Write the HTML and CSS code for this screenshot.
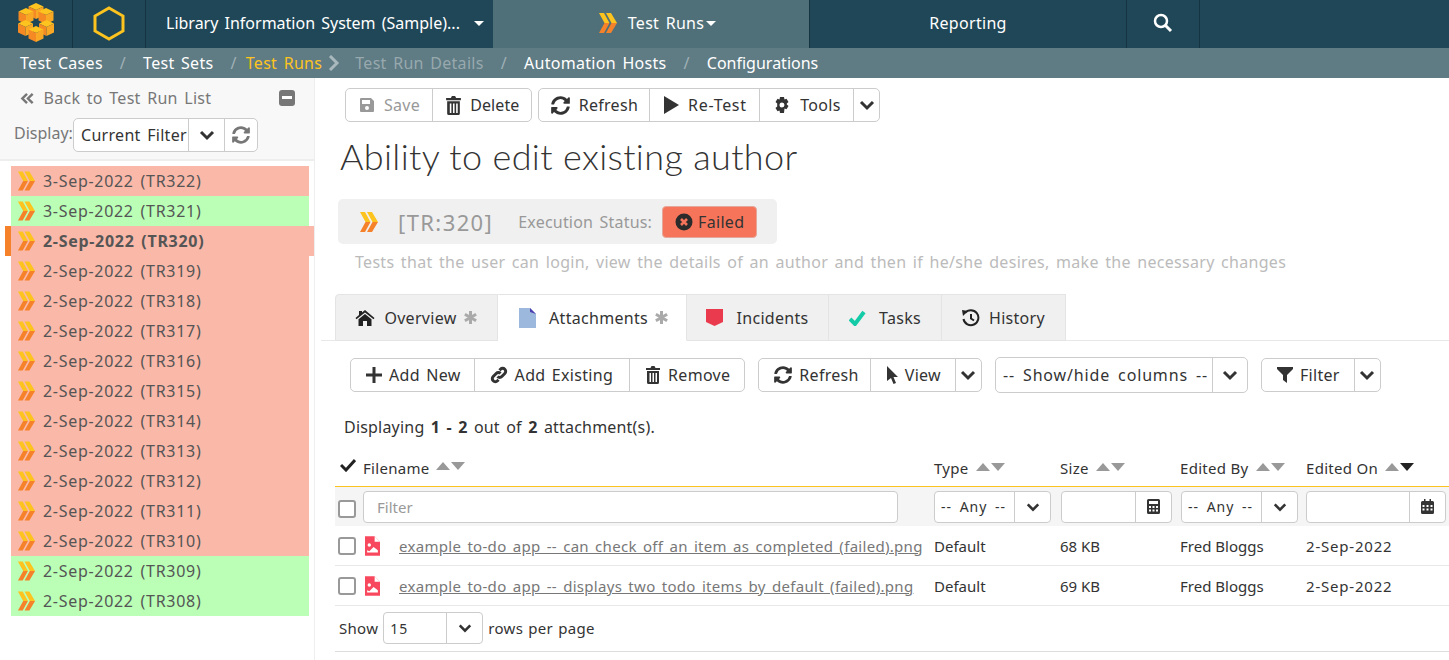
FILE: index.html
```html
<!DOCTYPE html>
<html lang="en">

<head>
    <meta charset="UTF-8" />
    <title>Ability to edit existing author</title>
    <link rel="stylesheet" href="styles.css">
</head>

<body>
    <svg class="sprite" width="0" height="0">
        <symbol id="i-runs" viewBox="0 0 20 20">
            <path fill="#fdc31e" d="M1 0h5l5.500 10H6.500z M8 0h5l6 10h-5.500z" />
            <path fill="#f5822a" d="M6.500 10h5L6 20H1z M13.500 10H19l-6 10H8z" />
        </symbol>
        <symbol id="i-down" viewBox="0 0 16 16">
            <path fill="none" stroke="currentColor" stroke-width="3" d="M2 5l6 6 6-6" />
        </symbol>
        <symbol id="i-refresh" viewBox="0 0 512 512">
            <path fill="currentColor" d="M370 133A168 168 0 0 0 89 215c-1 6-7 11-12 11H20c-8 0-14-7-12-15C30 95 132 8 256 8c68 0 130 27 175 71l36-36c15-15 41-4 41 17v135c0 9-7 17-17 17H356c-21 0-32-26-17-41zM20 296h135c21 0 32 26 17 41l-30 42a168 168 0 0 0 281-82c1-6 7-11 12-11h57c8 0 14 7 12 15-22 116-124 203-248 203-68 0-130-27-175-71l-36 36c-15 15-41 4-41-17V313c0-9 7-17 16-17z" />
        </symbol>
        <symbol id="i-trash" viewBox="0 0 16 18">
            <path fill="currentColor" d="M1 2h4.500l1-2h3l1 2H15v2H1zM2 5h12v11.500a1.500 1.500 0 0 1-1.500 1.500h-9A1.500 1.500 0 0 1 2 16.500zm2.500 2v9h1.500V7zm3 0v9H9V7zm3 0v9H12V7z" />
        </symbol>
        <symbol id="i-chev2" viewBox="0 0 16 16">
            <path fill="none" stroke="currentColor" stroke-width="2.600" d="M7.500 3L2.500 8l5 5M13.500 3l-5 5 5 5" />
        </symbol>
        <symbol id="i-img" viewBox="0 0 14 18">
            <path fill="#f8485e" d="M0 0h9l5 5v13H0z" />
            <path fill="#fff" d="M9 0l5 5H9z" />
            <circle fill="#fff" cx="4" cy="8" r="1.600" />
            <path fill="#fff" d="M2 15v-2l2 1 4-4 4 3v2z" />
        </symbol>
        <symbol id="i-funnel" viewBox="0 0 16 16">
            <path fill="currentColor" d="M0 0h16v2l-6 6v8l-4-3V8L0 2z" />
        </symbol>
        <symbol id="i-star" viewBox="0 0 16 16">
            <path stroke="#aaa" stroke-width="3.200" d="M8 1v14M2 4.500l12 7M14 4.500l-12 7" />
        </symbol>
        <g id="cube">
            <path fill="#fdc31e" d="M0-8L7.500-4.500 0-1-7.500-4.500z" />
            <path fill="#f58a24" d="M-7.500-4.500L0-1V8L-7.500 4.500z" />
            <path fill="#f9a825" d="M7.500-4.500L0-1V8L7.500 4.500z" />
        </g>
    </svg>

    <header class="topbar">
        <div class="top-cell logo-cell">
            <svg width="36" height="40" viewBox="0 0 36 40">
                <use href="#cube" x="18" y="8" />
                <use href="#cube" x="8" y="13" />
                <use href="#cube" x="28" y="13" />
                <use href="#cube" x="7.500" y="25" />
                <use href="#cube" x="28.500" y="25" />
                <use href="#cube" x="18" y="31" />
            </svg>
        </div>
        <div class="top-cell hex-cell">
            <svg width="32" height="35" viewBox="0 0 32 35">
                <path fill="none" stroke="#fdc31e" stroke-width="3" d="M16 2l14 8v15l-14 8-14-8V10z" />
            </svg>
        </div>
        <div class="top-cell project-cell">Library Information System (Sample)... <span class="caret"></span></div>
        <div class="top-cell runs-cell">
            <svg class="runs-icon" width="20" height="20"><use href="#i-runs" /></svg>
            Test Runs<span class="caret caret-tight"></span>
        </div>
        <div class="top-cell reporting-cell">Reporting</div>
        <div class="top-cell search-cell">
            <svg width="20" height="20" viewBox="0 0 20 20">
                <circle cx="8" cy="8" r="6" fill="none" stroke="#fff" stroke-width="2.500" />
                <path stroke="#fff" stroke-width="3" d="M12 12l6 6" />
            </svg>
        </div>
    </header>

    <nav class="subbar">
        <a class="sub-link">Test Cases</a><span class="sub-sep">/</span>
        <a class="sub-link">Test Sets</a><span class="sub-sep sub-sep-near">/</span>
        <a class="sub-link sub-active">Test Runs</a>
        <svg class="sub-arrow" width="12" height="16" viewBox="0 0 12 16"><path fill="none" stroke="#a9b8bc" stroke-width="3" d="M2 1l7 7-7 7" /></svg>
        <a class="sub-link sub-muted">Test Run Details</a><span class="sub-sep">/</span>
        <a class="sub-link">Automation Hosts</a><span class="sub-sep">/</span>
        <a class="sub-link sub-last">Configurations</a>
    </nav>

    <div class="page">
        <aside class="sidebar">
            <div class="side-head">
                <div class="back-row">
                    <span class="back-link"><svg width="15" height="15"><use href="#i-chev2" /></svg> Back to Test Run List</span>
                    <span class="collapse"></span>
                </div>
                <div class="display-row">
                    <span class="display-label">Display:</span>
                    <div class="btn-group display-group">
                        <span class="btn display-value">Current Filter</span>
                        <span class="btn btn-icon display-caret"><svg width="16" height="16"><use href="#i-down" /></svg></span>
                        <span class="btn btn-icon btn-grey display-refresh"><svg width="18" height="18"><use href="#i-refresh" /></svg></span>
                    </div>
                </div>
            </div>
            <ul id="runList" class="run-list"></ul>
        </aside>

        <main class="main">
            <div class="toolbar">
                <div class="btn-group">
                    <span class="btn btn-disabled">
                        <svg width="16" height="16" viewBox="0 0 16 16"><path fill="currentColor" fill-rule="evenodd" d="M2 1h10l3 3v10a1 1 0 0 1-1 1H2a1 1 0 0 1-1-1V2a1 1 0 0 1 1-1zm1 2v4h8V3zm5 6a2 2 0 1 0 0 4 2 2 0 0 0 0-4z" /></svg>
                        Save</span>
                    <span class="btn btn-delete"><svg width="17" height="19"><use href="#i-trash" /></svg> Delete</span>
                </div>
                <div class="btn-group">
                    <span class="btn btn-refresh"><svg width="19" height="19"><use href="#i-refresh" /></svg> Refresh</span>
                    <span class="btn btn-retest"><svg width="16" height="18" viewBox="0 0 16 18"><path fill="currentColor" d="M1 0l15 9-15 9z" /></svg> Re-Test</span>
                    <span class="btn btn-tools">
                        <svg width="18" height="18" viewBox="0 0 18 18"><path fill="currentColor" fill-rule="evenodd" d="M7 1h4l.5 2.500 2-.8 2 3.300-1.700 1.500v1l1.700 1.500-2 3.300-2-.8L11 17H7l-.5-2.500-2 .8-2-3.300L4.200 10.500v-3L2.500 6l2-3.300 2 .8zM9 6.500a2.500 2.500 0 1 0 0 5 2.500 2.500 0 0 0 0-5z" /></svg>
                        Tools</span>
                    <span class="btn btn-icon btn-caret"><svg width="16" height="16"><use href="#i-down" /></svg></span>
                </div>
            </div>

            <h1 class="title">Ability to edit existing author</h1>

            <div class="status-box">
                <svg class="status-icon" width="20" height="20"><use href="#i-runs" /></svg>
                <span class="status-token">[TR:320]</span>
                <span class="status-label">Execution Status:</span>
                <span class="status-value">
                    <svg width="18" height="18" viewBox="0 0 18 18"><circle cx="9" cy="9" r="8.500" fill="#2b2b2b" /><path stroke="#f6755a" stroke-width="2.600" d="M6 6l6 6M12 6l-6 6" /></svg>
                    Failed</span>
            </div>

            <p class="description">Tests that the user can login, view the details of an author and then if he/she desires, make the necessary changes</p>

            <div class="tabs">
                <div class="tab tab-overview">
                    <svg width="20" height="18" viewBox="0 0 20 18"><path fill="#222" d="M10 1l9.500 8-1 1.200L10 3.500 1.500 10.200l-1-1.200L4 6V2h3v1.600zM10 5l6.500 5.300V17h-4.500v-5H8v5H3.500v-6.700z" /></svg>
                    Overview <svg class="star" width="15" height="15"><use href="#i-star" /></svg>
                </div>
                <div class="tab tab-active tab-attach">
                    <svg class="tab-doc" width="17" height="20" viewBox="0 0 17 20"><path fill="#9cb8dc" d="M0 0h11l6 6v14H0z" /><path fill="#4b3fb0" d="M11 0l6 6-6-2z" /></svg>
                    Attachments <svg class="star" width="15" height="15"><use href="#i-star" /></svg>
                </div>
                <div class="tab tab-incidents">
                    <svg class="tab-doc" width="17" height="17" viewBox="0 0 17 17"><path fill="#ea3a4d" d="M0 0h17v13l-8.500 4L0 13z" /></svg>
                    Incidents
                </div>
                <div class="tab tab-tasks">
                    <svg class="tab-doc" width="17" height="16" viewBox="0 0 17 16"><path fill="none" stroke="#14cba8" stroke-width="4" d="M1 9l5 5L15 2" /></svg>
                    Tasks
                </div>
                <div class="tab tab-history">
                    <svg width="18" height="18" viewBox="0 0 18 18"><path fill="none" stroke="#222" stroke-width="2" d="M3 4a7.500 7.500 0 1 1-1.500 6M9 5v4.500l3 2" /><path fill="#222" d="M0 1l6 1-5 5z" /></svg>
                    History
                </div>
            </div>

            <div class="grid-tools">
                <div class="btn-group">
                    <span class="btn btn-sm btn-add"><svg width="16" height="16" viewBox="0 0 16 16"><path fill="currentColor" d="M6.500 0h3v6.500H16v3H9.500V16h-3V9.500H0v-3h6.500z" /></svg> Add New</span>
                    <span class="btn btn-sm btn-existing"><svg width="18" height="18" viewBox="0 0 18 18"><path fill="none" stroke="currentColor" stroke-width="3" d="M7.500 10.500a3 3 0 0 0 4.300 0l3-3a3 3 0 0 0-4.300-4.300L9.500 4.300M10.500 7.500a3 3 0 0 0-4.300 0l-3 3a3 3 0 0 0 4.300 4.300l1-1.100" /></svg> Add Existing</span>
                    <span class="btn btn-sm"><svg width="16" height="18"><use href="#i-trash" /></svg> Remove</span>
                </div>
                <div class="btn-group">
                    <span class="btn btn-sm btn-grid-refresh"><svg width="18" height="18"><use href="#i-refresh" /></svg> Refresh</span>
                    <span class="btn btn-sm"><svg width="12" height="18" viewBox="0 0 12 18"><path fill="currentColor" d="M1 0l11 11H7.500l2.500 6-2.500 1-2.500-6-4 3z" /></svg> View</span>
                    <span class="btn btn-sm btn-icon btn-caret"><svg width="16" height="16"><use href="#i-down" /></svg></span>
                </div>
                <div class="btn-group group-tall">
                    <span class="btn btn-sm btn-columns">-- Show/hide columns --</span>
                    <span class="btn btn-sm btn-icon btn-columns-caret"><svg width="16" height="16"><use href="#i-down" /></svg></span>
                </div>
                <div class="btn-group">
                    <span class="btn btn-sm"><svg width="16" height="16"><use href="#i-funnel" /></svg> Filter</span>
                    <span class="btn btn-sm btn-icon btn-caret"><svg width="16" height="16"><use href="#i-down" /></svg></span>
                </div>
            </div>

            <p class="count">Displaying <b>1 - 2</b> out of <b>2</b> attachment(s).</p>

            <table class="grid">
                <colgroup>
                    <col class="col-name">
                    <col class="col-type">
                    <col class="col-size">
                    <col class="col-by">
                    <col class="col-on">
                </colgroup>
                <tr class="grid-head">
                    <th>
                        <div class="name-cell">
                            <svg class="check-all" width="16" height="14" viewBox="0 0 16 14"><path fill="none" stroke="#222" stroke-width="3" d="M1 7l5 5L15 2" /></svg>
                            Filename <span class="sort"><i class="up"></i><i class="dn"></i></span>
                        </div>
                    </th>
                    <th>Type <span class="sort"><i class="up"></i><i class="dn"></i></span></th>
                    <th>Size <span class="sort"><i class="up"></i><i class="dn"></i></span></th>
                    <th>Edited By <span class="sort"><i class="up"></i><i class="dn"></i></span></th>
                    <th>Edited On <span class="sort"><i class="up"></i><i class="dn dn-on"></i></span></th>
                </tr>
                <tr class="grid-filter">
                    <td>
                        <div class="name-cell">
                            <span class="checkbox"></span>
                            <span class="input input-name">Filter</span>
                        </div>
                    </td>
                    <td>
                        <span class="input input-select any-type"><span class="sel-text">-- Any --</span><span class="add-on"><svg width="14" height="14"><use href="#i-down" /></svg></span></span>
                    </td>
                    <td>
                        <span class="input input-select size-box"><span class="sel-text"></span><span class="add-on">
                            <svg width="13" height="15" viewBox="0 0 13 15"><path fill="#333" fill-rule="evenodd" d="M1.500 0h10A1.500 1.500 0 0 1 13 1.500v12a1.500 1.500 0 0 1-1.500 1.500h-10A1.500 1.500 0 0 1 0 13.500v-12A1.500 1.500 0 0 1 1.500 0zM2 2v3h9V2zm0 5v2h2V7zm3.500 0v2h2V7zM9 7v2h2V7zm-7 3.500v2h2v-2zm3.500 0v2h2v-2zm3.500 0v2h2v-2z" /></svg>
                        </span></span>
                    </td>
                    <td>
                        <span class="input input-select any-by"><span class="sel-text">-- Any --</span><span class="add-on"><svg width="14" height="14"><use href="#i-down" /></svg></span></span>
                    </td>
                    <td>
                        <span class="input input-select date-box"><span class="sel-text"></span><span class="add-on">
                            <svg width="13" height="15" viewBox="0 0 13 15"><path fill="#333" fill-rule="evenodd" d="M3 0h1.500v2h4V0H10v2h1.500A1.500 1.500 0 0 1 13 3.500v10a1.500 1.500 0 0 1-1.500 1.500h-10A1.500 1.500 0 0 1 0 13.500v-10A1.500 1.500 0 0 1 1.500 2H3zM1.500 6v2h2V6zm4 0v2h2V6zm4 0v2h2V6zm-8 3.500v2h2v-2zm4 0v2h2v-2zm4 0v2h2v-2z" /></svg>
                        </span></span>
                    </td>
                </tr>
                <tr class="grid-row">
                    <td>
                        <div class="name-cell">
                            <span class="checkbox"></span>
                            <svg class="file-icon" width="15" height="20"><use href="#i-img" /></svg>
                            <a class="file-link">example to-do app -- can check off an item as completed (failed).png</a>
                        </div>
                    </td>
                    <td>Default</td>
                    <td>68 KB</td>
                    <td>Fred Bloggs</td>
                    <td class="date">2-Sep-2022</td>
                </tr>
                <tr class="grid-row">
                    <td>
                        <div class="name-cell">
                            <span class="checkbox"></span>
                            <svg class="file-icon" width="15" height="20"><use href="#i-img" /></svg>
                            <a class="file-link">example to-do app -- displays two todo items by default (failed).png</a>
                        </div>
                    </td>
                    <td>Default</td>
                    <td>69 KB</td>
                    <td>Fred Bloggs</td>
                    <td class="date">2-Sep-2022</td>
                </tr>
            </table>

            <div class="pager">
                Show
                <span class="input input-select page-size"><span class="sel-text">15</span><span class="add-on"><svg width="14" height="14"><use href="#i-down" /></svg></span></span>
                rows per page
            </div>
        </main>
    </div>

    <script src="app.js"></script>
</body>

</html>
```

FILE: app.js
```js
const runs = [
    ["3-Sep-2022", 322, "fail"],
    ["3-Sep-2022", 321, "pass"],
    ["2-Sep-2022", 320, "fail", true],
    ["2-Sep-2022", 319, "fail"],
    ["2-Sep-2022", 318, "fail"],
    ["2-Sep-2022", 317, "fail"],
    ["2-Sep-2022", 316, "fail"],
    ["2-Sep-2022", 315, "fail"],
    ["2-Sep-2022", 314, "fail"],
    ["2-Sep-2022", 313, "fail"],
    ["2-Sep-2022", 312, "fail"],
    ["2-Sep-2022", 311, "fail"],
    ["2-Sep-2022", 310, "fail"],
    ["2-Sep-2022", 309, "pass"],
    ["2-Sep-2022", 308, "pass"],
];

const list = document.getElementById("runList");
runs.forEach(([date, id, status, selected]) => {
    const li = document.createElement("li");
    li.className = `run run-${status}` + (selected ? " run-selected" : "");
    li.innerHTML = `<svg width="19" height="20"><use href="#i-runs" /></svg> ${date} (TR${id})`;
    list.appendChild(li);
});
```

FILE: styles.css
```css
html,
body {
    margin: 0;
    padding: 0;
    font-family: "Noto Sans", sans-serif;
    font-size: 16px;
    letter-spacing: 0.3px;
    word-spacing: 2px;
    color: #333;
    background-color: #fff;
    overflow: hidden;
}

.sprite {
    display: block;
    height: 0;
}

svg {
    flex: none;
}

/* top bar */
.topbar {
    display: flex;
    height: 48px;
    background-color: #1f4757;
    color: #fff;
}

.top-cell {
    display: flex;
    align-items: center;
    justify-content: center;
    box-sizing: border-box;
    padding-bottom: 2px;
    border-right: 1px solid #153442;
}

.logo-cell,
.hex-cell,
.search-cell {
    width: 73px;
}

.project-cell {
    width: 347px;
    justify-content: flex-start;
    padding-left: 20px;
    gap: 8px;
    white-space: pre;
    letter-spacing: 0;
    border-right: none;
}

.runs-cell {
    width: 317px;
    padding-left: 12px;
    background-color: #4f7078;
    gap: 10px;
}

.reporting-cell {
    width: 317px;
}

.caret {
    display: inline-block;
    border-left: 5px solid transparent;
    border-right: 5px solid transparent;
    border-top: 5px solid #fff;
}

.caret-tight {
    margin-left: -8px;
}

/* second nav */
.subbar {
    display: flex;
    align-items: center;
    height: 30px;
    background-color: #5f7b84;
    padding-left: 20px;
    color: #fff;
    white-space: nowrap;
}

.sub-sep {
    color: #9fb1b6;
    margin: 0 17px;
}

.sub-sep-near {
    margin: 0 9px 0 17px;
}

.sub-active {
    color: #fdc31e;
}

.sub-muted {
    color: #98a9ae;
}

.sub-last {
    letter-spacing: 0;
}

.sub-arrow {
    margin: 0 15px 0 6px;
}

.page {
    display: flex;
}

/* left side */
.sidebar {
    box-sizing: border-box;
    width: 315px;
    height: 582px;
    border-right: 1px solid #eee;
    flex: none;
}

.side-head {
    box-sizing: border-box;
    height: 83px;
    padding: 10px 19px 0 14px;
    background-color: #f8f8f8;
    border-bottom: 2px solid #eee;
}

.back-row {
    display: flex;
    align-items: center;
    justify-content: space-between;
    padding-left: 6px;
    color: #777;
    line-height: 20px;
}

.back-link svg {
    vertical-align: -2px;
    margin-right: 2px;
}

.collapse {
    position: relative;
    width: 16px;
    height: 16px;
    border-radius: 3px;
    background-color: #777;
}

.collapse::after {
    content: "";
    position: absolute;
    left: 3px;
    top: 6px;
    width: 10px;
    height: 3px;
    background-color: #fff;
}

.display-row {
    display: flex;
    align-items: center;
    margin-top: 10px;
}

.display-label {
    width: 59px;
    flex: none;
    margin-top: -4px;
    color: #777;
    letter-spacing: 0;
}

.display-group {
    height: 35px;
}

.run-list {
    list-style: none;
    margin: 5px 5px 0 5px;
    padding: 0;
}

.run {
    display: flex;
    align-items: center;
    gap: 7px;
    height: 30px;
    margin-left: 6px;
    padding-left: 6px;
    box-sizing: border-box;
    color: #555;
    letter-spacing: 0.7px;
}

.run-fail {
    background-color: #fab8a8;
}

.run-pass {
    background-color: #baffb5;
}

.run-selected {
    font-weight: 700;
    margin-left: 0;
    margin-right: -5px;
    border-left: 6px solid #f5822a;
}

/* buttons */
.btn-group {
    display: inline-flex;
    align-items: stretch;
    border: 1px solid #ccc;
    border-radius: 5px;
    background-color: #fff;
    height: 34px;
    box-sizing: border-box;
}

.btn {
    display: flex;
    align-items: center;
    gap: 9px;
    padding: 0 12px 0 13px;
    border-left: 1px solid #ccc;
    white-space: nowrap;
    color: #333;
}

.btn:first-child {
    border-left: none;
}

.btn-disabled {
    color: #999;
}

.btn-delete {
    padding: 0 12px 0 12px;
    gap: 8px;
    letter-spacing: 0.1px;
}

.btn-refresh,
.btn-retest,
.btn-tools {
    box-sizing: border-box;
    justify-content: center;
    padding: 0;
}

.btn-refresh { width: 110px; }
.btn-retest { width: 110px; letter-spacing: 0.7px; }
.btn-tools { width: 94px; }

.btn-icon {
    justify-content: center;
    padding: 0;
}

.btn-grey {
    color: #777;
}

.display-value {
    box-sizing: border-box;
    width: 114px;
    padding: 0 0 0 7px;
}

.display-caret {
    width: 35px;
}

.display-refresh {
    width: 32px;
}

.btn-caret {
    box-sizing: border-box;
    width: 26px;
}

/* main column */
.main {
    flex: 1;
    min-width: 0;
    padding: 10px 0 0 6px;
}

.toolbar {
    display: flex;
    gap: 6px;
    padding-left: 24px;
}

.title {
    margin: 12px 0 0 19px;
    font-family: Lato, sans-serif;
    font-size: 36px;
    line-height: 44px;
    font-weight: 300;
    letter-spacing: 0.35px;
    word-spacing: 0;
    color: #333;
}

.status-box {
    display: flex;
    align-items: center;
    width: 439px;
    height: 45px;
    box-sizing: border-box;
    margin: 21px 0 0 17px;
    padding-left: 21px;
    background-color: #f0f0f0;
    border-radius: 5px;
}

.status-token {
    margin-left: 19px;
    font-size: 22px;
    letter-spacing: 1.4px;
    color: #999;
}

.status-label {
    margin-left: 25px;
    letter-spacing: 0.2px;
    color: #999;
}

.status-value {
    display: flex;
    align-items: center;
    gap: 5px;
    height: 32px;
    margin-left: 10px;
    padding: 0 12px;
    box-sizing: border-box;
    background-color: #f6755a;
    border: 1px solid #e5a79a;
    border-radius: 4px;
}

.description {
    margin: 8px 0 0 34px;
    line-height: 20px;
    color: #bbb;
    white-space: nowrap;
}

/* tabs */
.tabs {
    display: flex;
    height: 47px;
    box-sizing: border-box;
    margin-top: 22px;
    padding-left: 14px;
    border-bottom: 1px solid #e8e8e8;
}

.tab {
    display: flex;
    align-items: center;
    justify-content: center;
    gap: 9px;
    height: 47px;
    box-sizing: border-box;
    background-color: #f0f0f0;
    border: 1px solid #e4e4e4;
    border-left: none;
}

.tab-overview {
    width: 163px;
    border-left: 1px solid #e4e4e4;
    border-top-left-radius: 4px;
}

.tab-attach { width: 189px; padding-left: 4px; }
.tab-incidents { width: 142px; }
.tab-tasks { width: 113px; }
.tab-history { width: 124px; }

.tab-active {
    background-color: #fff;
    border-bottom: 1px solid #fff;
}

.tab-doc {
    margin-right: 4px;
}

.star {
    margin-left: -3px;
}

/* grid tools */
.grid-tools {
    display: flex;
    align-items: center;
    gap: 13px;
    margin-top: 16px;
    padding-left: 29px;
}

.btn-sm {
    gap: 7px;
    padding: 0 14px 0 15px;
}

.btn-sm.btn-icon {
    padding: 0;
}

.btn-add {
    padding-right: 13px;
}

.btn-existing {
    padding-right: 16px;
}

.btn-grid-refresh {
    padding-right: 11px;
}

.group-tall {
    height: 36px;
}

.btn-columns {
    padding: 0 0 0 7px;
    width: 216px;
    box-sizing: border-box;
    letter-spacing: 0.85px;
    word-spacing: 3px;
}

.btn-columns-caret {
    width: 35px;
    box-sizing: border-box;
}

.count {
    margin: 23px 0 0 23px;
    line-height: 22px;
    letter-spacing: 0.2px;
}

/* table */
.grid {
    table-layout: fixed;
    border-collapse: collapse;
    width: 1114px;
    margin: 11px 0 0 14px;
    font-size: 15px;
    letter-spacing: 0;
    word-spacing: 0;
}

.col-name { width: 599px; }
.col-type { width: 126px; }
.col-size { width: 120px; }
.col-by { width: 126px; }
.col-on { width: 143px; }

.grid th {
    height: 37px;
    padding: 0;
    font-weight: 400;
    letter-spacing: 0.3px;
    text-align: left;
    border-bottom: 1px solid #fdc31e;
}

.grid td {
    padding: 0;
}

.name-cell {
    display: flex;
    align-items: center;
    gap: 0;
}

.check-all {
    margin: -6px 7px 0 5px;
}

.sort {
    display: inline-flex;
    gap: 1px;
    vertical-align: 3px;
    margin-left: 3px;
}

.name-cell .sort {
    margin-left: 6px;
    margin-top: -4px;
}

.sort i {
    display: block;
    border-left: 7.500px solid transparent;
    border-right: 7.500px solid transparent;
}

.sort .up {
    border-bottom: 8px solid #999;
}

.sort .dn {
    border-top: 8px solid #999;
}

.sort .dn-on {
    border-top-color: #222;
}

.grid-filter td {
    height: 39px;
    background-color: #f5f5f5;
}

.checkbox {
    flex: none;
    width: 14px;
    height: 14px;
    margin: 0 9px 0 3px;
    border: 2px solid #999;
    border-radius: 3px;
    background-color: #fff;
}

.grid-filter .checkbox {
    margin-top: 5px;
    margin-right: 7px;
}

.input {
    display: inline-flex;
    align-items: center;
    box-sizing: border-box;
    height: 32px;
    background-color: #fff;
    border: 1px solid #ccc;
    border-radius: 4px;
}

.input-name {
    width: 535px;
    padding-left: 13px;
    color: #999;
}

.input-select {
    vertical-align: middle;
    font-size: 14px;
}

.sel-text {
    flex: 1;
    padding-left: 6px;
    white-space: nowrap;
    letter-spacing: 1px;
    word-spacing: 3px;
}

.add-on {
    display: flex;
    align-items: center;
    justify-content: center;
    align-self: stretch;
    width: 35px;
    border-left: 1px solid #ccc;
}

.any-type { width: 117px; }
.size-box { width: 111px; margin-left: 1px; }
.any-by { width: 117px; margin-left: 1px; }
.date-box { width: 140px; }

.grid-row td {
    height: 39px;
    border-bottom: 1px solid #e8e8e8;
}

.grid-row td.date {
    letter-spacing: 0.8px;
}

.grid-row .checkbox {
    margin-right: 9px;
}

.file-icon {
    margin-right: 19px;
}

.file-link {
    color: #777;
    letter-spacing: 0.3px;
    word-spacing: 2px;
    text-decoration: underline;
    white-space: nowrap;
}

/* pager */
.pager {
    display: flex;
    align-items: center;
    gap: 5px;
    width: 1114px;
    height: 46px;
    box-sizing: border-box;
    margin-left: 14px;
    padding: 0 0 1px 4px;
    border-bottom: 1px solid #ddd;
    font-size: 15px;
    word-spacing: 1px;
}

.page-size {
    width: 100px;
}
```
